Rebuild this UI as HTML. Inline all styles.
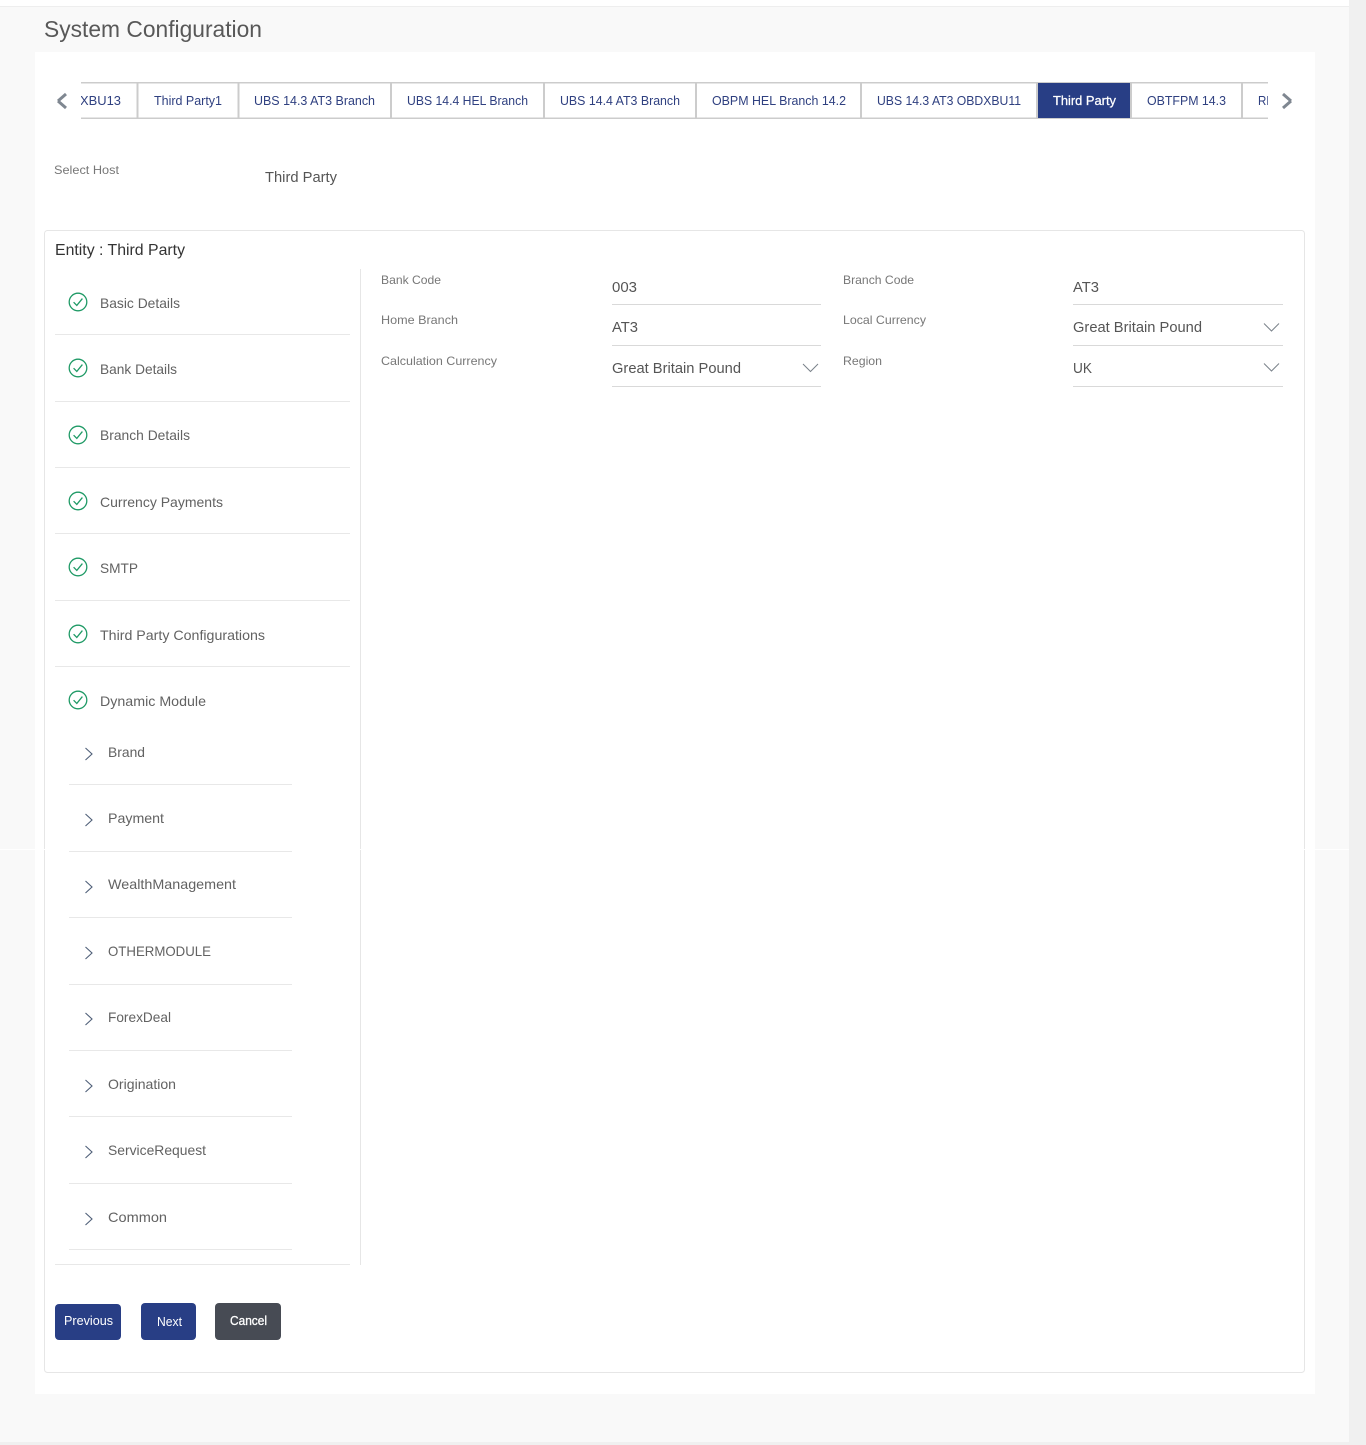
<!DOCTYPE html>
<html lang="en">
<head>
<meta charset="utf-8">
<title>System Configuration</title>
<style>
html,body{margin:0;padding:0;background:#fff;width:1366px;height:1445px;overflow:hidden}
svg{display:block}
text{font-family:"Liberation Sans",sans-serif}
.t{font-size:12.5px;fill:#2f4080}
.l{font-size:12px;fill:#777}
.v{font-size:14.5px;fill:#555}
.m{font-size:14px;fill:#626262}
.b{font-size:12.5px;fill:#fff}
</style>
</head>
<body>
<svg width="1366" height="1445" viewBox="0 0 1366 1445" xmlns="http://www.w3.org/2000/svg">
<defs>
<clipPath id="c"><rect x="81" y="80" width="1187" height="42"/></clipPath>
<g id="ok" fill="none" stroke="#1f9a66"><circle cx="0" cy="0" r="8.8" stroke-width="1.3"/><path d="M-4.4 0.2L-1.2 3.4L4.4 -3.4" stroke-width="1.3"/></g>
<path id="sub" d="M-3.5 -6L3 0L-3.5 6" fill="none" stroke="#4f5f78" stroke-width="1.1"/>
<path id="dd" d="M0 0L7.5 7.5L15 0" fill="none" stroke="#7a828a" stroke-width="1"/>
</defs>

<rect width="1366" height="1445" fill="#fff"/>
<rect x="0" y="6" width="1349" height="1" fill="#eeeeee"/>
<rect x="0" y="7" width="1349" height="1435" fill="#f9f9f9"/>
<rect x="1349" y="0" width="17" height="1445" fill="#f0f0f0"/>
<rect x="0" y="1442" width="1349" height="3" fill="#f0f0f0"/>
<rect x="35" y="52" width="1280" height="1342" fill="#fff"/>

<text x="44" y="37" font-size="23" fill="#585858" textLength="218" lengthAdjust="spacingAndGlyphs">System Configuration</text>

<!-- tabs -->
<path d="M58 101l8 -7M58 101l8 7" fill="none" stroke="#7f8791" stroke-width="3"/>
<path d="M1291 101l-8 -7M1291 101l-8 7" fill="none" stroke="#7f8791" stroke-width="3"/>
<g clip-path="url(#c)">
<rect x="81" y="82" width="1187" height="1.5" fill="#cccccc"/>
<rect x="81" y="117.500" width="1187" height="1.5" fill="#cccccc"/>
<rect x="136.500" y="82" width="2" height="37" fill="#cccccc"/>
<rect x="237.500" y="82" width="2" height="37" fill="#cccccc"/>
<rect x="390" y="82" width="2" height="37" fill="#cccccc"/>
<rect x="543" y="82" width="2" height="37" fill="#cccccc"/>
<rect x="695" y="82" width="2" height="37" fill="#cccccc"/>
<rect x="860" y="82" width="2" height="37" fill="#cccccc"/>
<rect x="1036" y="82" width="2" height="37" fill="#cccccc"/>
<rect x="1130" y="82" width="2" height="37" fill="#cccccc"/>
<rect x="1241" y="82" width="2" height="37" fill="#cccccc"/>
<rect x="1038" y="83" width="92" height="35" fill="#283e85"/>
<text class="t" x="52" y="105" textLength="69" lengthAdjust="spacingAndGlyphs">OBDXBU13</text>
<text class="t" x="154" y="105" textLength="68" lengthAdjust="spacingAndGlyphs">Third Party1</text>
<text class="t" x="254" y="105" textLength="121" lengthAdjust="spacingAndGlyphs">UBS 14.3 AT3 Branch</text>
<text class="t" x="407" y="105" textLength="121" lengthAdjust="spacingAndGlyphs">UBS 14.4 HEL Branch</text>
<text class="t" x="560" y="105" textLength="120" lengthAdjust="spacingAndGlyphs">UBS 14.4 AT3 Branch</text>
<text class="t" x="712" y="105" textLength="134" lengthAdjust="spacingAndGlyphs">OBPM HEL Branch 14.2</text>
<text class="t" x="877" y="105" textLength="144" lengthAdjust="spacingAndGlyphs">UBS 14.3 AT3 OBDXBU11</text>
<text class="t" style="fill:#fff;stroke:#fff;stroke-width:.25" x="1053" y="105" textLength="63" lengthAdjust="spacingAndGlyphs">Third Party</text>
<text class="t" x="1147" y="105" textLength="79" lengthAdjust="spacingAndGlyphs">OBTFPM 14.3</text>
<text class="t" x="1258" y="105" textLength="16" lengthAdjust="spacingAndGlyphs">RE</text>
</g>

<text class="l" x="54" y="174" textLength="65" lengthAdjust="spacingAndGlyphs">Select Host</text>
<text class="v" x="265" y="182" textLength="72" lengthAdjust="spacingAndGlyphs">Third Party</text>

<!-- card -->
<rect x="44.500" y="230.500" width="1260" height="1142" rx="3" fill="#fff" stroke="#e6e6e6"/>
<text x="55" y="255" font-size="16" fill="#333" textLength="130" lengthAdjust="spacingAndGlyphs">Entity : Third Party</text>

<rect x="360" y="269" width="1" height="996" fill="#e6e6e6"/>

<!-- sidebar lines -->
<g fill="#e8e8e8">
<rect x="55" y="334" width="295" height="1"/>
<rect x="55" y="401" width="295" height="1"/>
<rect x="55" y="467" width="295" height="1"/>
<rect x="55" y="533" width="295" height="1"/>
<rect x="55" y="600" width="295" height="1"/>
<rect x="55" y="666" width="295" height="1"/>
<rect x="55" y="1264" width="295" height="1"/>
<rect x="69" y="784" width="223" height="1"/>
<rect x="69" y="851" width="223" height="1"/>
<rect x="69" y="917" width="223" height="1"/>
<rect x="69" y="984" width="223" height="1"/>
<rect x="69" y="1050" width="223" height="1"/>
<rect x="69" y="1116" width="223" height="1"/>
<rect x="69" y="1183" width="223" height="1"/>
<rect x="69" y="1249" width="223" height="1"/>
</g>

<use href="#ok" x="78" y="302"/>
<use href="#ok" x="78" y="368"/>
<use href="#ok" x="78" y="435"/>
<use href="#ok" x="78" y="501"/>
<use href="#ok" x="78" y="567"/>
<use href="#ok" x="78" y="634"/>
<use href="#ok" x="78" y="700"/>

<text class="m" x="100" y="308" textLength="80" lengthAdjust="spacingAndGlyphs">Basic Details</text>
<text class="m" x="100" y="374" textLength="77" lengthAdjust="spacingAndGlyphs">Bank Details</text>
<text class="m" x="100" y="440" textLength="90" lengthAdjust="spacingAndGlyphs">Branch Details</text>
<text class="m" x="100" y="507" textLength="123" lengthAdjust="spacingAndGlyphs">Currency Payments</text>
<text class="m" x="100" y="573" textLength="38" lengthAdjust="spacingAndGlyphs">SMTP</text>
<text class="m" x="100" y="640" textLength="165" lengthAdjust="spacingAndGlyphs">Third Party Configurations</text>
<text class="m" x="100" y="706" textLength="106" lengthAdjust="spacingAndGlyphs">Dynamic Module</text>

<use href="#sub" x="89" y="754"/>
<use href="#sub" x="89" y="820"/>
<use href="#sub" x="89" y="887"/>
<use href="#sub" x="89" y="953"/>
<use href="#sub" x="89" y="1019"/>
<use href="#sub" x="89" y="1086"/>
<use href="#sub" x="89" y="1152"/>
<use href="#sub" x="89" y="1219"/>

<text class="m" x="108" y="757" textLength="37" lengthAdjust="spacingAndGlyphs">Brand</text>
<text class="m" x="108" y="823" textLength="56" lengthAdjust="spacingAndGlyphs">Payment</text>
<text class="m" x="108" y="889" textLength="128" lengthAdjust="spacingAndGlyphs">WealthManagement</text>
<text class="m" x="108" y="956" textLength="103" lengthAdjust="spacingAndGlyphs">OTHERMODULE</text>
<text class="m" x="108" y="1022" textLength="63" lengthAdjust="spacingAndGlyphs">ForexDeal</text>
<text class="m" x="108" y="1089" textLength="68" lengthAdjust="spacingAndGlyphs">Origination</text>
<text class="m" x="108" y="1155" textLength="98" lengthAdjust="spacingAndGlyphs">ServiceRequest</text>
<text class="m" x="108" y="1222" textLength="59" lengthAdjust="spacingAndGlyphs">Common</text>

<!-- form -->
<text class="l" x="381" y="284" textLength="60" lengthAdjust="spacingAndGlyphs">Bank Code</text>
<text class="l" x="381" y="324" textLength="77" lengthAdjust="spacingAndGlyphs">Home Branch</text>
<text class="l" x="381" y="365" textLength="116" lengthAdjust="spacingAndGlyphs">Calculation Currency</text>
<text class="l" x="843" y="284" textLength="71" lengthAdjust="spacingAndGlyphs">Branch Code</text>
<text class="l" x="843" y="324" textLength="83" lengthAdjust="spacingAndGlyphs">Local Currency</text>
<text class="l" x="843" y="365" textLength="39" lengthAdjust="spacingAndGlyphs">Region</text>

<text class="v" x="612" y="292" textLength="25" lengthAdjust="spacingAndGlyphs">003</text>
<text class="v" x="612" y="332" textLength="26" lengthAdjust="spacingAndGlyphs">AT3</text>
<text class="v" x="612" y="373" textLength="129" lengthAdjust="spacingAndGlyphs">Great Britain Pound</text>
<text class="v" x="1073" y="292" textLength="26" lengthAdjust="spacingAndGlyphs">AT3</text>
<text class="v" x="1073" y="332" textLength="129" lengthAdjust="spacingAndGlyphs">Great Britain Pound</text>
<text class="v" x="1073" y="373" textLength="19" lengthAdjust="spacingAndGlyphs">UK</text>

<g fill="#d9d9d9">
<rect x="612" y="304" width="209" height="1"/>
<rect x="612" y="345" width="209" height="1"/>
<rect x="612" y="386" width="209" height="1"/>
<rect x="1073" y="304" width="210" height="1"/>
<rect x="1073" y="345" width="210" height="1"/>
<rect x="1073" y="386" width="210" height="1"/>
</g>
<use href="#dd" x="803" y="364"/>
<use href="#dd" x="1264" y="323.500"/>
<use href="#dd" x="1264" y="363.500"/>

<!-- buttons -->
<rect x="55" y="1304" width="66" height="36" rx="4" fill="#283e85"/>
<rect x="141" y="1303" width="55" height="37" rx="4" fill="#283e85"/>
<rect x="215" y="1303" width="66" height="37" rx="4" fill="#474b54"/>
<text class="b" x="64" y="1325" textLength="49" lengthAdjust="spacingAndGlyphs">Previous</text>
<text class="b" x="157" y="1326" textLength="25" lengthAdjust="spacingAndGlyphs">Next</text>
<text class="b" style="stroke:#fff;stroke-width:.3" x="230" y="1325" textLength="37" lengthAdjust="spacingAndGlyphs">Cancel</text>

<!-- faint seam -->
<rect x="0" y="849" width="1349" height="1" fill="#ffffff"/>
</svg>
</body>
</html>
